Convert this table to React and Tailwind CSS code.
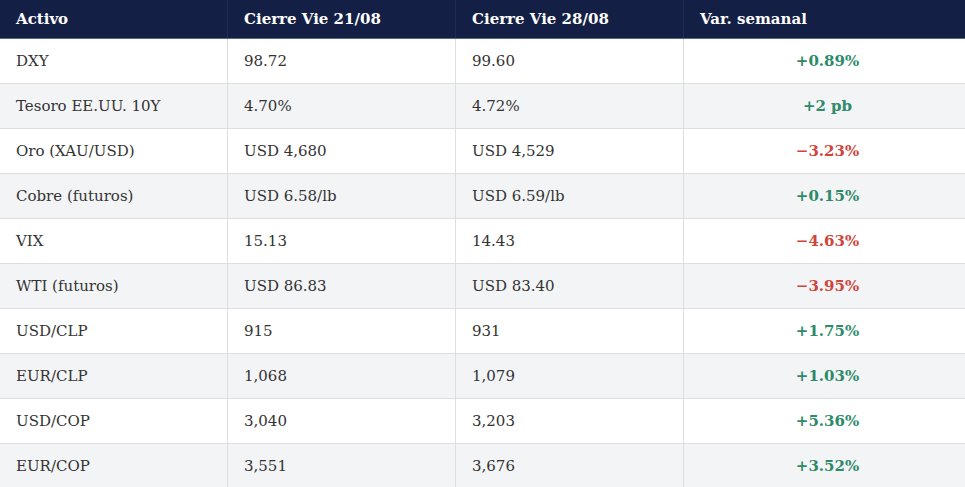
const rows = [
    { asset: 'DXY', prev: '98.72', last: '99.60', change: '+0.89%', up: true },
    { asset: 'Tesoro EE.UU. 10Y', prev: '4.70%', last: '4.72%', change: '+2 pb', up: true },
    { asset: 'Oro (XAU/USD)', prev: 'USD 4,680', last: 'USD 4,529', change: '\u22123.23%', up: false },
    { asset: 'Cobre (futuros)', prev: 'USD 6.58/lb', last: 'USD 6.59/lb', change: '+0.15%', up: true },
    { asset: 'VIX', prev: '15.13', last: '14.43', change: '\u22124.63%', up: false },
    { asset: 'WTI (futuros)', prev: 'USD 86.83', last: 'USD 83.40', change: '\u22123.95%', up: false },
    { asset: 'USD/CLP', prev: '915', last: '931', change: '+1.75%', up: true },
    { asset: 'EUR/CLP', prev: '1,068', last: '1,079', change: '+1.03%', up: true },
    { asset: 'USD/COP', prev: '3,040', last: '3,203', change: '+5.36%', up: true },
    { asset: 'EUR/COP', prev: '3,551', last: '3,676', change: '+3.52%', up: true },
];

export default function App() {
    return (
        <div className="w-[965px] h-[487px] overflow-hidden bg-white font-['DejaVu_Serif',serif] text-[15px]">
            <div className="w-[971px]">
                <div className="grid h-[39px] grid-cols-[228px_228px_228px_1fr] border-b border-[#5c6580] bg-[#141f45] font-bold text-white">
                    <div className="flex items-center border-r border-[#1e2a52] px-4">Activo</div>
                    <div className="flex items-center border-r border-[#1e2a52] px-4">Cierre Vie 21/08</div>
                    <div className="flex items-center border-r border-[#1e2a52] px-4">Cierre Vie 28/08</div>
                    <div className="flex items-center px-4">Var. semanal</div>
                </div>

                {rows.map((row, i) => (
                    <div
                        key={row.asset}
                        className={`grid h-[45px] grid-cols-[228px_228px_228px_1fr] border-b border-[#dedede] text-[#333333] ${i % 2 ? 'bg-[#f3f4f6]' : 'bg-white'}`}
                    >
                        <div className="flex items-center border-r border-[#dedede] px-4">{row.asset}</div>
                        <div className="flex items-center border-r border-[#dedede] px-4">{row.prev}</div>
                        <div className="flex items-center border-r border-[#dedede] px-4">{row.last}</div>
                        <div
                            className={`flex items-center justify-center px-4 font-bold ${row.up ? 'text-[#2e8a69]' : 'text-[#cf453b]'}`}
                        >
                            {row.change}
                        </div>
                    </div>
                ))}
            </div>
        </div>
    );
}
